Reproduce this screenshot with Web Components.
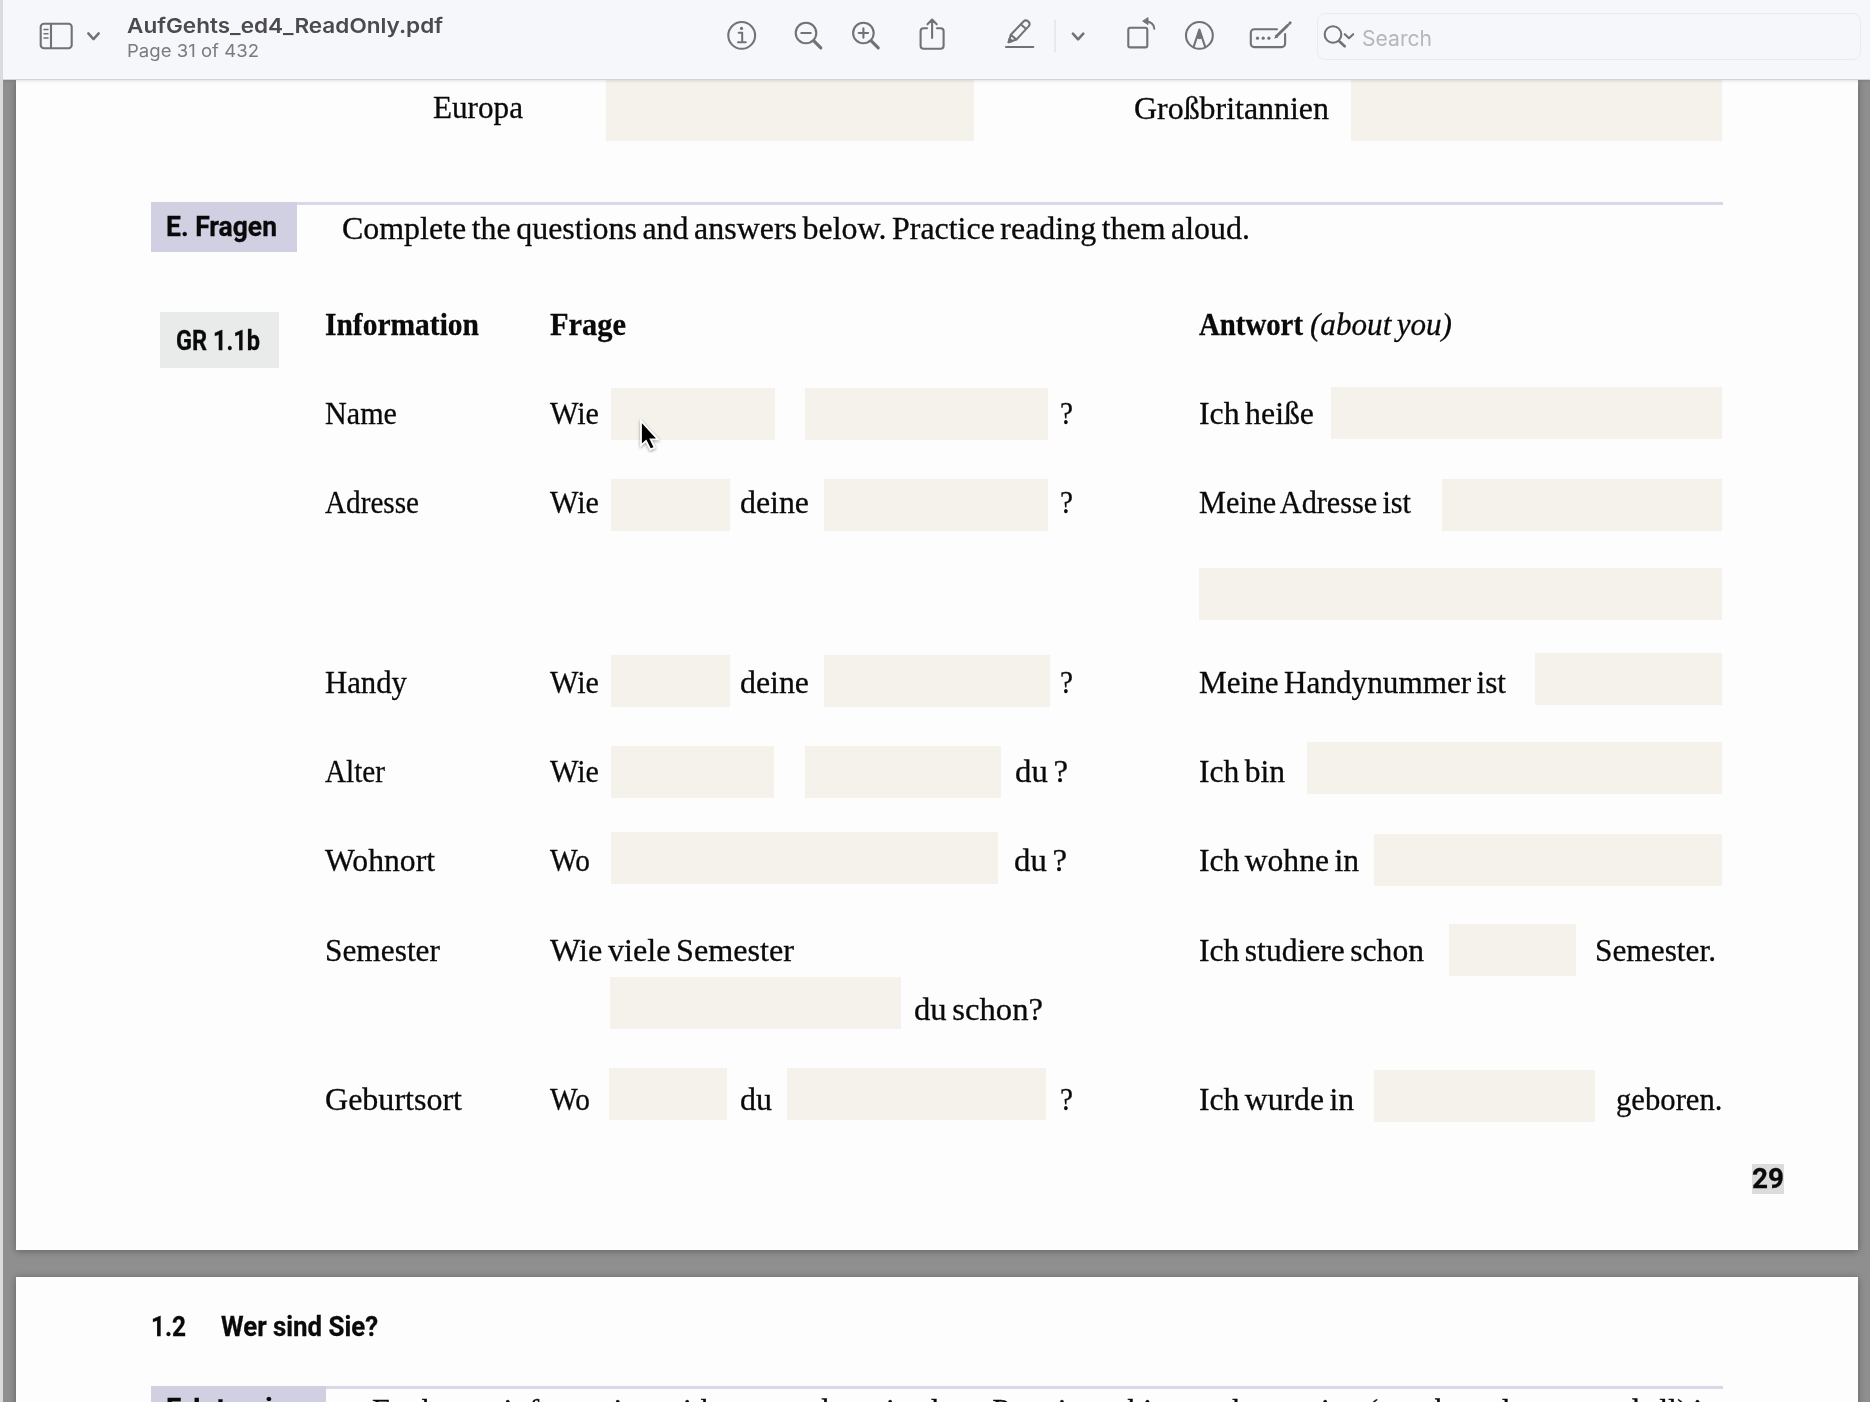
<!DOCTYPE html>
<html lang="de">
<head>
<meta charset="utf-8">
<title>AufGehts_ed4_ReadOnly.pdf</title>
<style>
html,body{margin:0;height:100%;overflow:hidden;background:#8e8e8e}
body{font-family:"Liberation Serif",serif;color:#0a0a0a}
</style>
</head>
<body>
<pdf-window></pdf-window>
<script>
const make = (tag, css, html, init) => {
  const t = document.createElement('template');
  t.innerHTML = `<style>${css}</style>${html}`;
  customElements.define(tag, class extends HTMLElement {
    connectedCallback() {
      if (this.shadowRoot) return;
      this.attachShadow({mode: 'open'}).append(t.content.cloneNode(true));
      if (init) init(this, this.shadowRoot);
    }
  });
};
const num = (el, name) => parseFloat(el.getAttribute(name) || 0);

/* Text set to an exact measure: w = width, g = gap before, dy = shift down */
make('fit-text', `
:host{display:block;flex:none;height:40px;line-height:40px;font-size:32.5px;white-space:pre;word-spacing:-2.5px;-webkit-text-stroke:.3px currentColor}
span{display:inline-block;transform-origin:0 50%}
:host([bold]){font-weight:700}
:host([italic]){font-style:italic}
:host([sans]){font-family:Roboto,sans-serif;font-weight:700;font-size:28.5px;word-spacing:0}
:host([ui]){font-family:Inter,sans-serif;height:24px;line-height:24px;word-spacing:0;-webkit-text-stroke:0}
:host([title]){font-size:20.5px;font-weight:600;color:#4b4b4e}
:host([sub]){font-size:17.5px;color:#7b7b7f}
:host([hint]){font-size:21px;color:#b6b6bb}
`, `<span><slot></slot></span>`, (el, root) => {
  const s = root.querySelector('span'), w = num(el, 'w');
  el.style.marginLeft = num(el, 'g') + 'px';
  el.style.marginTop = num(el, 'dy') + 'px';
  el.style.width = w + 'px';
  const natural = s.getBoundingClientRect().width;
  if (natural) s.style.transform = `scaleX(${w / natural})`;
});

/* Empty field of the worksheet */
make('answer-blank', `:host{display:block;flex:none;height:52px;background:#f5f2ec}`, ``, el => {
  el.style.marginLeft = num(el, 'g') + 'px';
  el.style.marginTop = num(el, 'dy') + 'px';
  el.style.width = num(el, 'w') + 'px';
  if (el.hasAttribute('h')) el.style.height = num(el, 'h') + 'px';
});

make('form-row', `
:host{display:grid;grid-template-columns:225px 649px 1fr;padding-left:309px;box-sizing:border-box}
div{display:flex;align-items:flex-start}
`, `<div><slot name="info"></slot></div><div><slot name="frage"></slot></div><div><slot name="antwort"></slot></div>`,
el => { el.style.height = num(el, 'h') + 'px'; });

make('row-part', `:host{display:flex;align-items:flex-start}`, `<slot></slot>`);

make('section-bar', `
:host{display:flex;box-sizing:border-box;margin-left:135px;width:1571.5px;height:50px;border-top:3px solid #d9d8e8;align-items:flex-start}
.tag{height:50px;margin-top:-3px;background:#d1d0e3;display:flex;padding:5px 0 0 15px;box-sizing:border-box;flex:none}
`, `<div class="tag"><slot name="tag"></slot></div><slot></slot>`, (el, root) => {
  root.querySelector('.tag').style.width = num(el, 'tagw') + 'px';
});

make('pdf-page', `
:host{display:block;flex:none;width:1842px;margin-left:16px;background:#fdfdfd;box-sizing:border-box;overflow:hidden;box-shadow:0 1px 7px rgba(0,0,0,.33)}
`, `<slot></slot>`);

const ICONS = {
  sidebar: [38, 36, '<rect x="40.7" y="23.7" width="31" height="24.6" rx="3.2"/><path d="M51 24v24"/><path stroke-width="1.5" d="M44 29.5h4M44 33.7h4M44 38h4"/>'],
  down: [84, 20, '<path stroke-width="2.5" d="M88.3 33.4l5.2 5.7 5.2-5.7"/>'],
  info: [726, 32, '<circle cx="741.7" cy="35.4" r="13.4"/><path stroke-width="2" d="M738.7 32.7h3.5v9.3M738 42.2h7.8"/><circle cx="741.5" cy="28.4" r="1.6" fill="#727276" stroke="none"/>'],
  minus: [792, 32, '<circle cx="806" cy="33" r="10.3"/><path d="M801.3 33h9.4"/><path stroke-width="3.2" d="M813.8 40.8l7 7"/>'],
  plus: [849, 32, '<circle cx="863.4" cy="33" r="10.3"/><path d="M858.7 33h9.4M863.4 28.3v9.4"/><path stroke-width="3.2" d="M871.2 40.8l7 7"/>'],
  share: [917, 30, '<path d="M927 28.2h-3.4a3 3 0 0 0-3 3v14.6a3 3 0 0 0 3 3h17a3 3 0 0 0 3-3V31.2a3 3 0 0 0-3-3H937M932.1 38V20M927.5 24.3l4.6-4.7 4.6 4.7"/>'],
  pencil: [1003, 34, '<path d="M1006 47h27.300"/><path d="M1008.600 42.200l2.200-7.400 12.700-13.300q2.300-2.100 4.600-.1 2.600 2 .7 4.700l-12.400 13.500zM1010.800 34.800l5.600 4.800M1020.800 24.300l5.300 4.700"/><path fill="#727276" d="M1008.600 42.200l1-3.400 2.600 2.300z"/>'],
  rule: [1053, 4, '<path stroke="#e3e3e8" stroke-width="1.4" d="M1055 20v32"/>'],
  down2: [1068, 20, '<path stroke-width="2.6" d="M1072.9 33.7l5.2 5.6 5.2-5.6"/>'],
  rotate: [1124, 36, '<rect x="1128.3" y="27.8" width="19" height="19.600" rx="2"/><path stroke-width="2" d="M1144.500 21.200q9.300 0 9.800 7.600"/><path fill="#727276" stroke-width="1" d="M1148 18v6.600l-5-3.300z"/>'],
  markup: [1184, 32, '<circle cx="1199.4" cy="35.4" r="13.4"/><path d="M1193.7 46.6l5.7-17 5.7 17"/><path fill="#727276" stroke-width="1" d="M1196.7 37.8l2.7-8.3 2.7 8.3q-2.7 2-5.4 0z"/>'],
  form: [1247, 48, '<path d="M1277 29.3h-22.8a3.4 3.4 0 0 0-3.4 3.4v11a3.4 3.4 0 0 0 3.4 3.4h27.500a3.4 3.4 0 0 0 3.4-3.4V34"/><path stroke-width="2.8" d="M1276.500 36.300l11.300-11"/><path stroke-width="2.8" d="M1289.600 23.400l.6-.6"/><path fill="#727276" stroke="none" d="M1274.300 38.700l1.200-4 2.800 2.600z"/><g fill="#727276" stroke="none"><circle cx="1257.500" cy="38.200" r="1.600"/><circle cx="1263.200" cy="38.200" r="1.600"/><circle cx="1268.900" cy="38.200" r="1.600"/></g>'],
  find: [1322, 34, '<circle cx="1333" cy="34.5" r="8.3"/><path stroke-width="2.6" d="M1339 41l5.700 5.300"/><path d="M1344.800 34.200l4.200 4 4.200-4"/>']
};
make('tool-icon', `:host{display:block;flex:none;height:80px}svg{display:block}`, ``, (el, root) => {
  const [x, w, body] = ICONS[el.getAttribute('name')];
  el.style.marginLeft = num(el, 'g') + 'px';
  root.innerHTML += `<svg width="${w}" height="80" viewBox="${x} 0 ${w} 80" fill="none" stroke="#727276" stroke-width="2.1" stroke-linecap="round" stroke-linejoin="round">${body}</svg>`;
});

make('pdf-toolbar', `
:host{display:flex;flex:none;height:80px;background:#f6f7fb;border-bottom:1px solid #d3d3d5;box-sizing:border-box;align-items:flex-start;position:relative;z-index:2;box-shadow:0 1px 3px rgba(0,0,0,.12)}
.name{display:flex;flex-direction:column;margin-left:22.500px;width:319px;padding-top:14px}
.search{display:flex;align-items:flex-start;box-sizing:border-box;width:544px;height:47px;margin:12.500px 0 0 22px;border:1px solid #ebebef;border-radius:8px;overflow:hidden}
.search tool-icon{margin-top:-13.500px}
`, `
<tool-icon name="sidebar" g="35"></tool-icon><tool-icon name="down" g="10"></tool-icon>
<div class="name"><fit-text ui title w="316">AufGehts_ed4_ReadOnly.pdf</fit-text><fit-text ui sub dy="1" w="132">Page 31 of 432</fit-text></div>
<tool-icon name="info" g="280.500"></tool-icon>
<tool-icon name="minus" g="34"></tool-icon>
<tool-icon name="plus" g="25"></tool-icon>
<tool-icon name="share" g="36"></tool-icon>
<tool-icon name="pencil" g="56"></tool-icon>
<tool-icon name="rule" g="15.500"></tool-icon>
<tool-icon name="down2" g="11.500"></tool-icon>
<tool-icon name="rotate" g="36"></tool-icon>
<tool-icon name="markup" g="24"></tool-icon>
<tool-icon name="form" g="31"></tool-icon>
<div class="search"><tool-icon name="find" g="4"></tool-icon><fit-text ui hint g="6" dy="13" w="70">Search</fit-text></div>
`);

make('mouse-pointer', `:host{position:absolute;left:635.500px;top:419px;z-index:3}svg{display:block;filter:drop-shadow(0 1.500px 1.500px rgba(0,0,0,.4))}`,
`<svg width="26" height="36" viewBox="0 0 26 36"><path d="M2 2v24.500l5-4.600 4.300 8.600 4.400-2-4-8.200h7.300z" fill="#000" stroke="#fff" stroke-width="1.800"/></svg>`);

make('pdf-window', `
:host{display:flex;flex-direction:column;position:relative;box-sizing:border-box;width:1870px;height:1402px;overflow:hidden;border-left:3px solid #d9dbdd;background:#8f8f8f}
pdf-page{margin-left:13px}
.first{height:1169.500px}
.second{height:140px;margin-top:27.500px}
.top{display:flex;align-items:flex-start;height:122px}
.heads{display:flex;align-items:flex-start;margin-top:52px;height:89px}
.ref{display:flex;flex:none;box-sizing:border-box;width:119px;height:56px;margin:8px 0 0 144px;padding:9px 0 0 16px;background:#e9ebea}
.foot{display:flex;justify-content:flex-end;margin-top:45px;padding-right:74.500px}
.no{display:flex;align-items:flex-start;height:30px;width:32px;background:#dcdcdc}
.title{display:flex;padding:30px 0 0 134.500px;height:78.500px}
`, `
<pdf-toolbar></pdf-toolbar>
<pdf-page class="first">
  <div class="top">
    <fit-text g="416.500" dy="7" w="90">Europa</fit-text>
    <answer-blank g="83.500" w="367.500" h="61"></answer-blank>
    <fit-text g="160" dy="8" w="195">Großbritannien</fit-text>
    <answer-blank g="22.500" w="371" h="61"></answer-blank>
  </div>
  <section-bar tagw="146">
    <fit-text slot="tag" sans w="111">E. Fragen</fit-text>
    <fit-text g="45" dy="3" w="908">Complete the questions and answers below. Practice reading them aloud.</fit-text>
  </section-bar>
  <div class="heads">
    <div class="ref"><fit-text sans w="84">GR 1.1b</fit-text></div>
    <fit-text bold g="46" w="154">Information</fit-text>
    <fit-text bold g="70.500" w="76">Frage</fit-text>
    <fit-text bold g="573.500" w="104">Antwort</fit-text>
    <fit-text italic g="7" w="142">(about you)</fit-text>
  </div>
  <form-row h="89">
    <fit-text slot="info" w="72">Name</fit-text>
    <row-part slot="frage"><fit-text w="49">Wie</fit-text><answer-blank g="12" dy="-5" w="163.500"></answer-blank><answer-blank g="30.500" dy="-5" w="243"></answer-blank><fit-text g="12" w="13">?</fit-text></row-part>
    <row-part slot="antwort"><fit-text w="115">Ich heiße</fit-text><answer-blank g="16.500" dy="-6" w="391.500"></answer-blank></row-part>
  </form-row>
  <form-row h="90">
    <fit-text slot="info" w="94">Adresse</fit-text>
    <row-part slot="frage"><fit-text w="49">Wie</fit-text><answer-blank g="12" dy="-3" w="119"></answer-blank><fit-text g="10" w="69">deine</fit-text><answer-blank g="15" dy="-3" w="223.500"></answer-blank><fit-text g="12.500" w="13">?</fit-text></row-part>
    <row-part slot="antwort"><fit-text w="212">Meine Adresse ist</fit-text><answer-blank g="30.500" dy="-3" w="280.500"></answer-blank></row-part>
  </form-row>
  <form-row h="90">
    <row-part slot="antwort"><answer-blank dy="-4" w="523"></answer-blank></row-part>
  </form-row>
  <form-row h="89">
    <fit-text slot="info" w="82">Handy</fit-text>
    <row-part slot="frage"><fit-text w="49">Wie</fit-text><answer-blank g="12" dy="-7" w="118.500"></answer-blank><fit-text g="10.500" w="69">deine</fit-text><answer-blank g="15" dy="-7" w="225.500"></answer-blank><fit-text g="10.500" w="13">?</fit-text></row-part>
    <row-part slot="antwort"><fit-text w="307">Meine Handynummer ist</fit-text><answer-blank g="29" dy="-9" w="187"></answer-blank></row-part>
  </form-row>
  <form-row h="89">
    <fit-text slot="info" w="60">Alter</fit-text>
    <row-part slot="frage"><fit-text w="49">Wie</fit-text><answer-blank g="12" dy="-5" w="162.500"></answer-blank><answer-blank g="31" dy="-5" w="196"></answer-blank><fit-text g="14.500" w="53">du ?</fit-text></row-part>
    <row-part slot="antwort"><fit-text w="86">Ich bin</fit-text><answer-blank g="22" dy="-9" w="415"></answer-blank></row-part>
  </form-row>
  <form-row h="90">
    <fit-text slot="info" w="110">Wohnort</fit-text>
    <row-part slot="frage"><fit-text w="40">Wo</fit-text><answer-blank g="21" dy="-8" w="387"></answer-blank><fit-text g="15.500" w="53">du ?</fit-text></row-part>
    <row-part slot="antwort"><fit-text w="160">Ich wohne in</fit-text><answer-blank g="14.500" dy="-6" w="348.500"></answer-blank></row-part>
  </form-row>
  <form-row h="59">
    <fit-text slot="info" w="115">Semester</fit-text>
    <fit-text slot="frage" w="244">Wie viele Semester</fit-text>
    <row-part slot="antwort"><fit-text w="225">Ich studiere schon</fit-text><answer-blank g="24.500" dy="-6" w="127.500"></answer-blank><fit-text g="18.500" w="121">Semester.</fit-text></row-part>
  </form-row>
  <form-row h="90">
    <row-part slot="frage"><answer-blank g="59.500" dy="-12" w="291"></answer-blank><fit-text g="13" w="129">du schon?</fit-text></row-part>
  </form-row>
  <form-row h="40">
    <fit-text slot="info" w="137">Geburtsort</fit-text>
    <row-part slot="frage"><fit-text w="40">Wo</fit-text><answer-blank g="18.500" dy="-11" w="118"></answer-blank><fit-text g="13" w="32">du</fit-text><answer-blank g="15" dy="-11" w="259"></answer-blank><fit-text g="14.500" w="13">?</fit-text></row-part>
    <row-part slot="antwort"><fit-text w="155">Ich wurde in</fit-text><answer-blank g="19.500" dy="-9" w="221.500"></answer-blank><fit-text g="20.500" w="106.500">geboren.</fit-text></row-part>
  </form-row>
  <div class="foot"><div class="no"><fit-text sans dy="-5" w="32">29</fit-text></div></div>
</pdf-page>
<pdf-page class="second">
  <div class="title"><fit-text sans w="35">1.2</fit-text><fit-text sans g="35" w="157">Wer sind Sie?</fit-text></div>
  <section-bar tagw="175">
    <fit-text slot="tag" sans dy="-1.500" w="142">F. Interview</fit-text>
    <fit-text g="45.500" dy="1" w="1346">Exchange information with two students in class. Practice asking each question (numbers, letters, and all) in</fit-text>
  </section-bar>
</pdf-page>
<mouse-pointer></mouse-pointer>
`);
</script>
</body>
</html>
